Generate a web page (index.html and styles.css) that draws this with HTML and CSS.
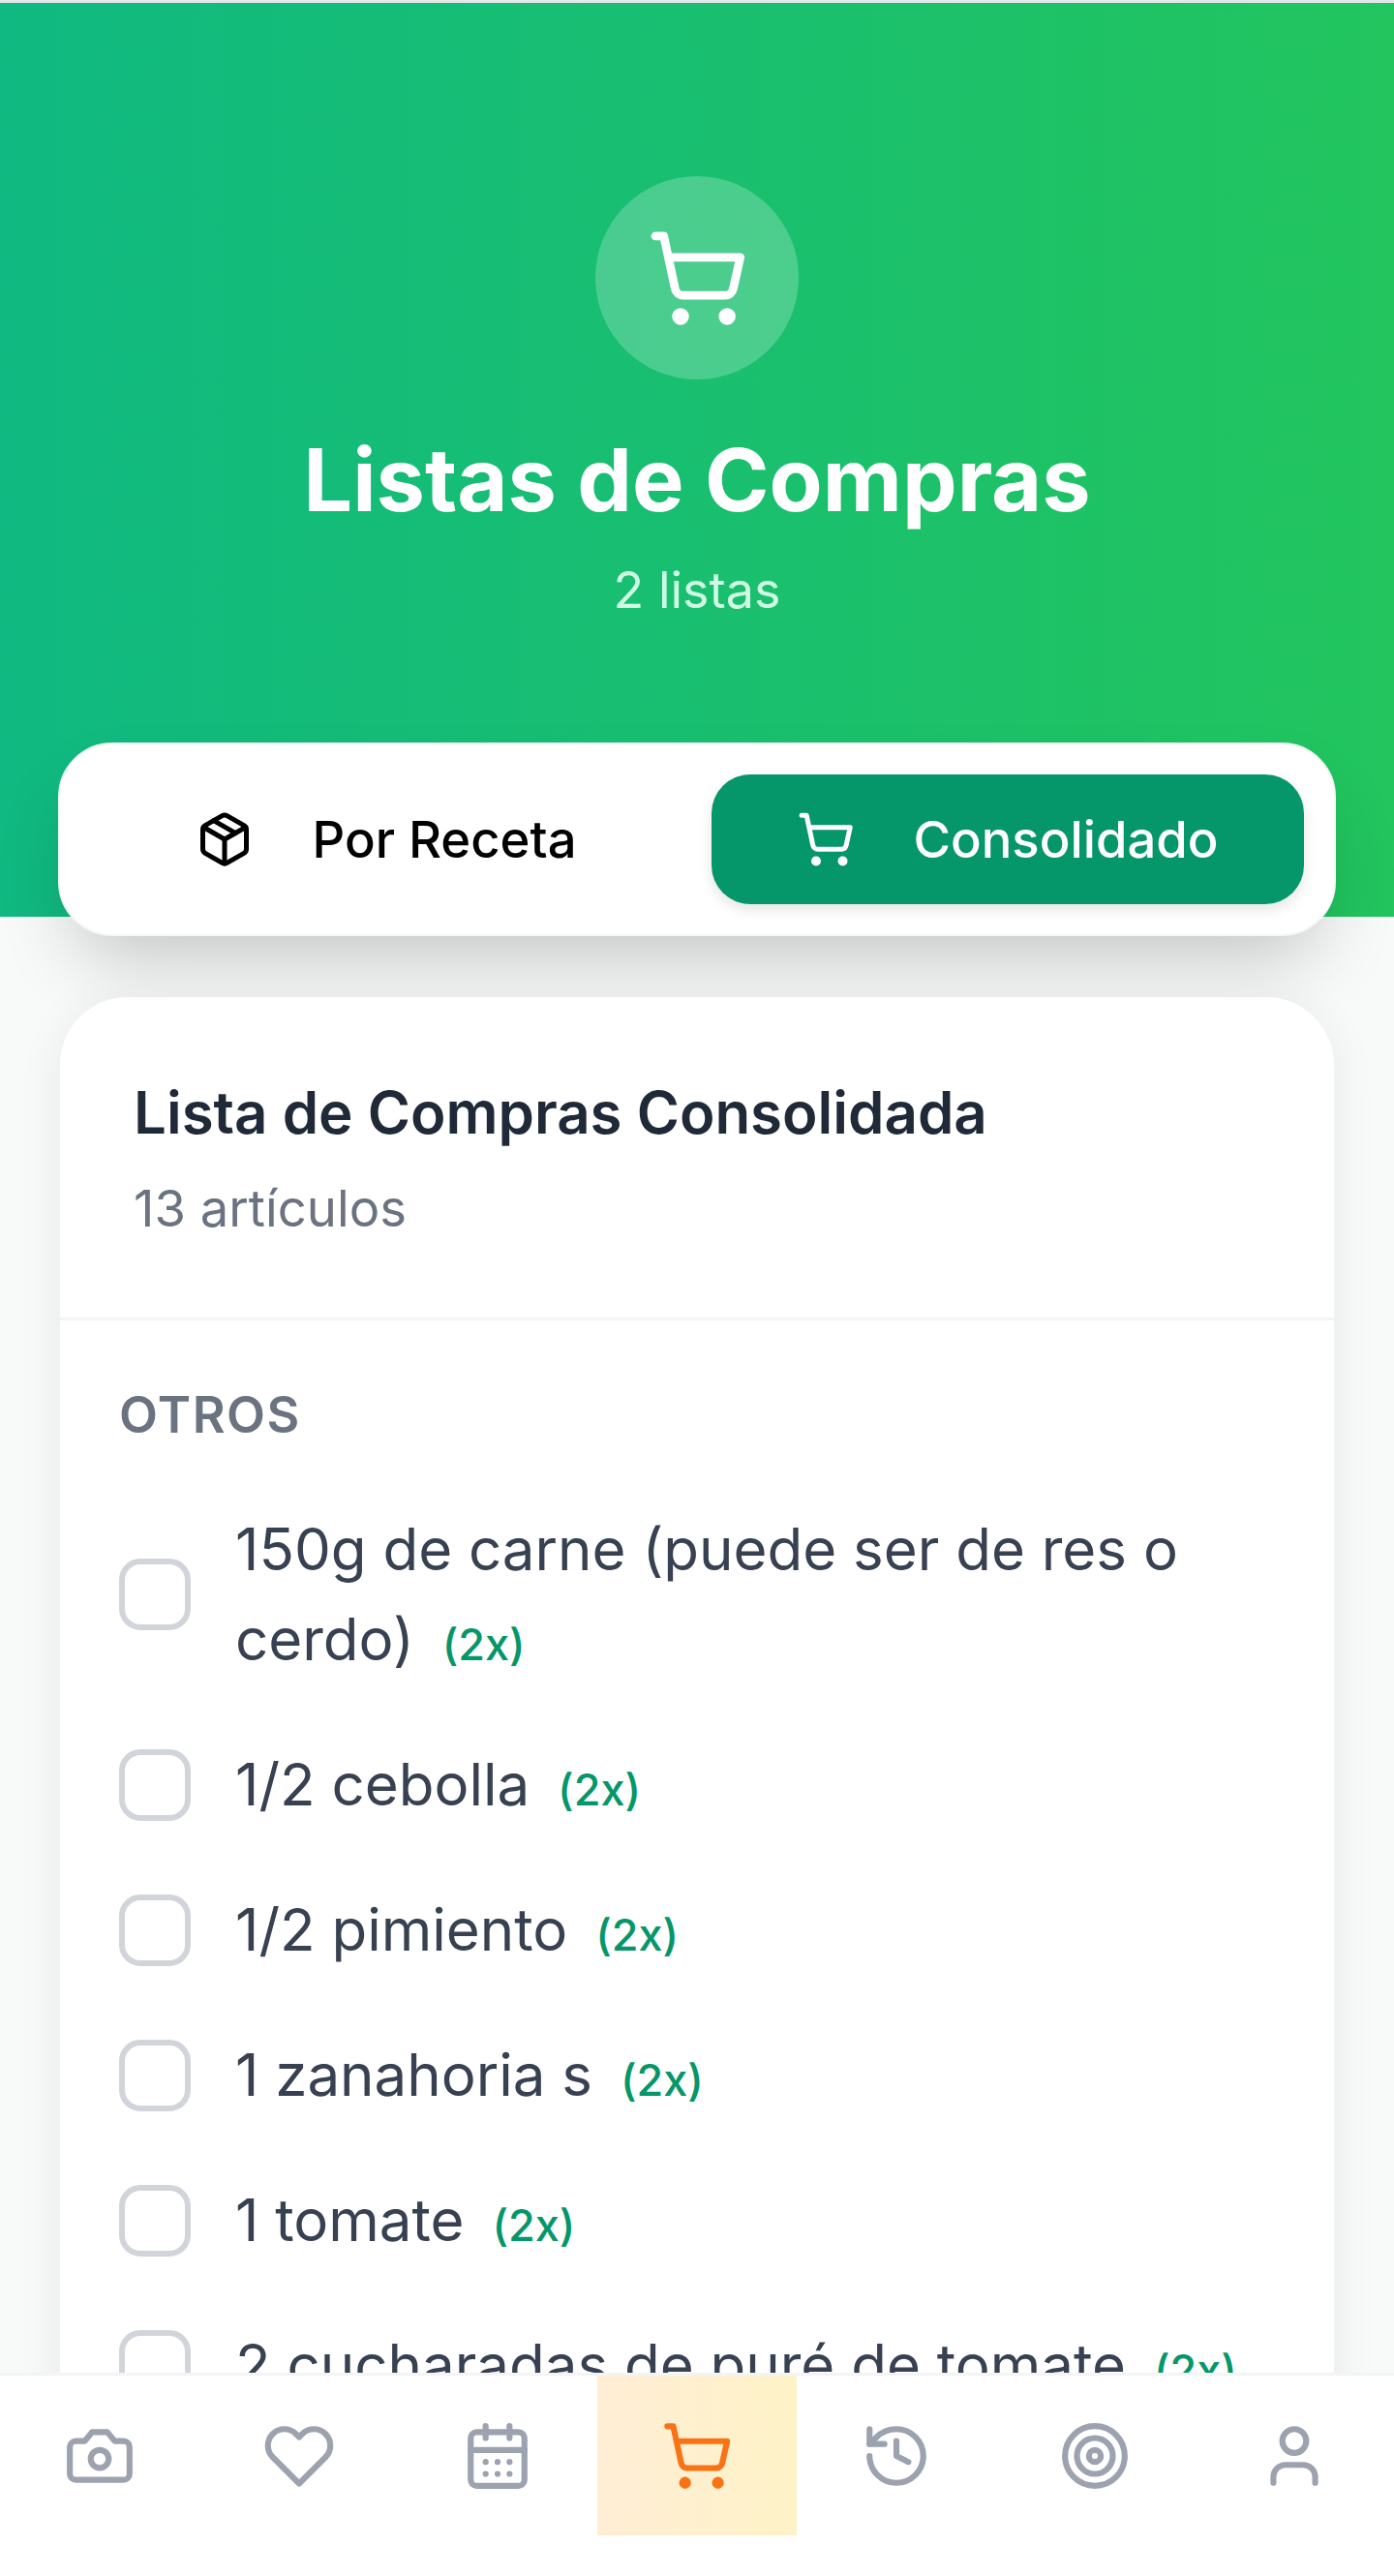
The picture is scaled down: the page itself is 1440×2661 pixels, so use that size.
FILE: index.html
```html
<!DOCTYPE html>
<html lang="es">
<head>
    <meta charset="UTF-8">
    <meta name="viewport" content="width=device-width, initial-scale=1.0">
    <title>Listas de Compras</title>
    <link rel="stylesheet" href="styles.css">
</head>
<body>
    <div class="page">
        <main class="content">
            <!-- Cabecera -->
            <header class="hero">
                <div class="hero-icon">
                    <svg viewBox="0 0 24 24"><circle cx="8" cy="21" r="1"/><circle cx="19" cy="21" r="1"/><path d="M2.05 2.05h2l2.66 12.42a2 2 0 0 0 2 1.58h9.78a2 2 0 0 0 1.95-1.57l1.65-7.43H5.12"/></svg>
                </div>
                <h1>Listas de Compras</h1>
                <p class="hero-sub">2 listas</p>
            </header>

            <!-- Pestañas -->
            <div class="tabs">
                <button class="tab">
                    <svg class="tab-icon" viewBox="0 0 24 24"><path d="m7.5 4.27 9 5.15"/><path d="M21 8a2 2 0 0 0-1-1.73l-7-4a2 2 0 0 0-2 0l-7 4A2 2 0 0 0 3 8v8a2 2 0 0 0 1 1.73l7 4a2 2 0 0 0 2 0l7-4A2 2 0 0 0 21 16Z"/><path d="m3.3 7 8.7 5 8.7-5"/><path d="M12 22V12"/></svg>
                    Por Receta
                </button>
                <button class="tab tab-active">
                    <svg class="tab-icon" viewBox="0 0 24 24"><circle cx="8" cy="21" r="1"/><circle cx="19" cy="21" r="1"/><path d="M2.05 2.05h2l2.66 12.42a2 2 0 0 0 2 1.58h9.78a2 2 0 0 0 1.95-1.57l1.65-7.43H5.12"/></svg>
                    Consolidado
                </button>
            </div>

            <!-- Lista consolidada -->
            <section class="card">
                <div class="card-head">
                    <h2>Lista de Compras Consolidada</h2>
                    <p>13 artículos</p>
                </div>
                <div class="card-body">
                    <h3>OTROS</h3>
                    <ul class="items">
                        <li class="item"><span class="check"></span><span class="item-text">150g de carne (puede ser de res o cerdo) <span class="qty">(2x)</span></span></li>
                        <li class="item"><span class="check"></span><span class="item-text">1/2 cebolla <span class="qty">(2x)</span></span></li>
                        <li class="item"><span class="check"></span><span class="item-text">1/2 pimiento <span class="qty">(2x)</span></span></li>
                        <li class="item"><span class="check"></span><span class="item-text">1 zanahoria s <span class="qty">(2x)</span></span></li>
                        <li class="item"><span class="check"></span><span class="item-text">1 tomate <span class="qty">(2x)</span></span></li>
                        <li class="item"><span class="check"></span><span class="item-text">2 cucharadas de puré de tomate <span class="qty">(2x)</span></span></li>
                    </ul>
                </div>
            </section>
        </main>

        <!-- Navegación inferior -->
        <nav class="bottom-nav">
            <a class="nav-item"><svg viewBox="0 0 24 24"><path d="M14.5 4h-5L7 7H4a2 2 0 0 0-2 2v9a2 2 0 0 0 2 2h16a2 2 0 0 0 2-2V9a2 2 0 0 0-2-2h-3l-2.5-3z"/><circle cx="12" cy="13" r="3"/></svg></a>
            <a class="nav-item"><svg viewBox="0 0 24 24"><path d="M20.84 4.61a5.5 5.5 0 0 0-7.78 0L12 5.67l-1.06-1.06a5.5 5.5 0 0 0-7.78 7.78l1.06 1.06L12 21.23l7.78-7.78 1.06-1.06a5.5 5.5 0 0 0 0-7.78z"/></svg></a>
            <a class="nav-item"><svg viewBox="0 0 24 24"><path d="M8 2v4"/><path d="M16 2v4"/><rect x="3" y="4" width="18" height="18" rx="2"/><path d="M3 10h18"/><path d="M8 14h.01"/><path d="M12 14h.01"/><path d="M16 14h.01"/><path d="M8 18h.01"/><path d="M12 18h.01"/><path d="M16 18h.01"/></svg></a>
            <a class="nav-item nav-active"><svg viewBox="0 0 24 24"><circle cx="8" cy="21" r="1"/><circle cx="19" cy="21" r="1"/><path d="M2.05 2.05h2l2.66 12.42a2 2 0 0 0 2 1.58h9.78a2 2 0 0 0 1.95-1.57l1.65-7.43H5.12"/></svg></a>
            <a class="nav-item"><svg viewBox="0 0 24 24"><path d="M3 12a9 9 0 1 0 9-9 9.75 9.75 0 0 0-6.74 2.74L3 8"/><path d="M3 3v5h5"/><path d="M12 7v5l4 2"/></svg></a>
            <a class="nav-item"><svg viewBox="0 0 24 24"><circle cx="12" cy="12" r="10"/><circle cx="12" cy="12" r="6"/><circle cx="12" cy="12" r="2"/></svg></a>
            <a class="nav-item"><svg viewBox="0 0 24 24"><path d="M19 21v-2a4 4 0 0 0-4-4H9a4 4 0 0 0-4 4v2"/><circle cx="12" cy="7" r="4"/></svg></a>
        </nav>
    </div>
</body>
</html>
```

FILE: styles.css
```css
* {
    box-sizing: border-box;
}

html,
body {
    margin: 0;
    height: 100%;
}

body {
    font-family: Inter, "Liberation Sans", sans-serif;
    background: #f7faf9;
    color: #374151;
}

svg {
    fill: none;
    stroke: currentColor;
    stroke-width: 2;
    stroke-linecap: round;
    stroke-linejoin: round;
}

.page {
    height: 100vh;
    display: flex;
    flex-direction: column;
    overflow: hidden;
    border-top: 3px solid #e5e7eb;
}

.content {
    flex: 1;
    min-height: 0;
    overflow: hidden;
}

/* Cabecera */
.hero {
    height: 944px;
    padding-top: 179px;
    display: flex;
    flex-direction: column;
    align-items: center;
    background: linear-gradient(90deg, #10b981, #22c55e);
    color: #fff;
}

.hero-icon {
    width: 210px;
    height: 210px;
    border-radius: 50%;
    background: rgba(255, 255, 255, 0.22);
    display: flex;
    align-items: center;
    justify-content: center;
}

.hero-icon svg {
    width: 105px;
    height: 105px;
}

.hero h1 {
    margin: 48px 0 0;
    font-size: 90px;
    line-height: 112px;
    font-weight: 700;
}

.hero-sub {
    margin: 26px 0 0;
    font-size: 52px;
    line-height: 64px;
    color: #d1fae5;
}

/* Pestañas */
.tabs {
    margin: -180px 60px 0;
    padding: 31px;
    height: 200px;
    display: grid;
    grid-template-columns: 1fr 1fr;
    gap: 30px;
    position: relative;
    background: #fff;
    border: 2px solid #f1f8f6;
    border-radius: 56px;
    box-shadow: 0 40px 80px -20px rgba(0, 0, 0, 0.22);
}

.tab {
    display: flex;
    align-items: center;
    justify-content: center;
    gap: 60px;
    border: none;
    border-radius: 40px;
    background: transparent;
    color: #000;
    font-family: inherit;
    font-size: 52.6px;
    font-weight: 500;
}

.tab-icon {
    width: 60px;
    height: 60px;
}

.tab-active {
    background: #059669;
    color: #fff;
    box-shadow: 0 6px 14px rgba(0, 0, 0, 0.1);
}

/* Tarjeta */
.card {
    margin: 63px 62px 0;
    position: relative;
    background: #fff;
    border-radius: 70px 70px 0 0;
    box-shadow: 0 8px 48px rgba(0, 0, 0, 0.07);
}

.card-head {
    height: 334px;
    padding: 77px 76px 0;
    border-bottom: 3px solid #f3f4f6;
}

.card-head h2 {
    margin: 0;
    font-size: 60px;
    line-height: 84px;
    font-weight: 600;
    color: #1f2937;
}

.card-head p {
    margin: 15px 0 0;
    font-size: 52.6px;
    line-height: 84px;
    color: #6b7280;
}

.card-body {
    padding: 62px 61px 0;
}

.card-body h3 {
    margin: 0 0 56px;
    font-size: 52px;
    line-height: 72px;
    font-weight: 600;
    letter-spacing: 1.5px;
    color: #6b7280;
}

.items {
    list-style: none;
    margin: 0;
    padding: 0;
    display: flex;
    flex-direction: column;
    gap: 57px;
}

.item {
    display: flex;
    align-items: center;
    gap: 46px;
}

.check {
    flex: none;
    width: 74px;
    height: 74px;
    border: 6px solid #d1d5db;
    border-radius: 22px;
}

.item-text {
    font-size: 60px;
    line-height: 93px;
}

.qty {
    margin-left: 12px;
    font-size: 45px;
    line-height: 1;
    font-weight: 500;
    color: #059669;
}

/* Navegación inferior */
.bottom-nav {
    flex: none;
    height: 210px;
    padding-bottom: 42px;
    display: grid;
    grid-template-columns: repeat(7, 1fr);
    background: #fff;
    border-top: 3px solid #f3f4f6;
    position: relative;
}

.nav-item {
    display: flex;
    align-items: center;
    justify-content: center;
    color: #9ca3af;
}

.nav-item svg {
    width: 74px;
    height: 74px;
}

.nav-active {
    color: #f97316;
    background: linear-gradient(90deg, #ffedd5, #fef3c7);
}
```
